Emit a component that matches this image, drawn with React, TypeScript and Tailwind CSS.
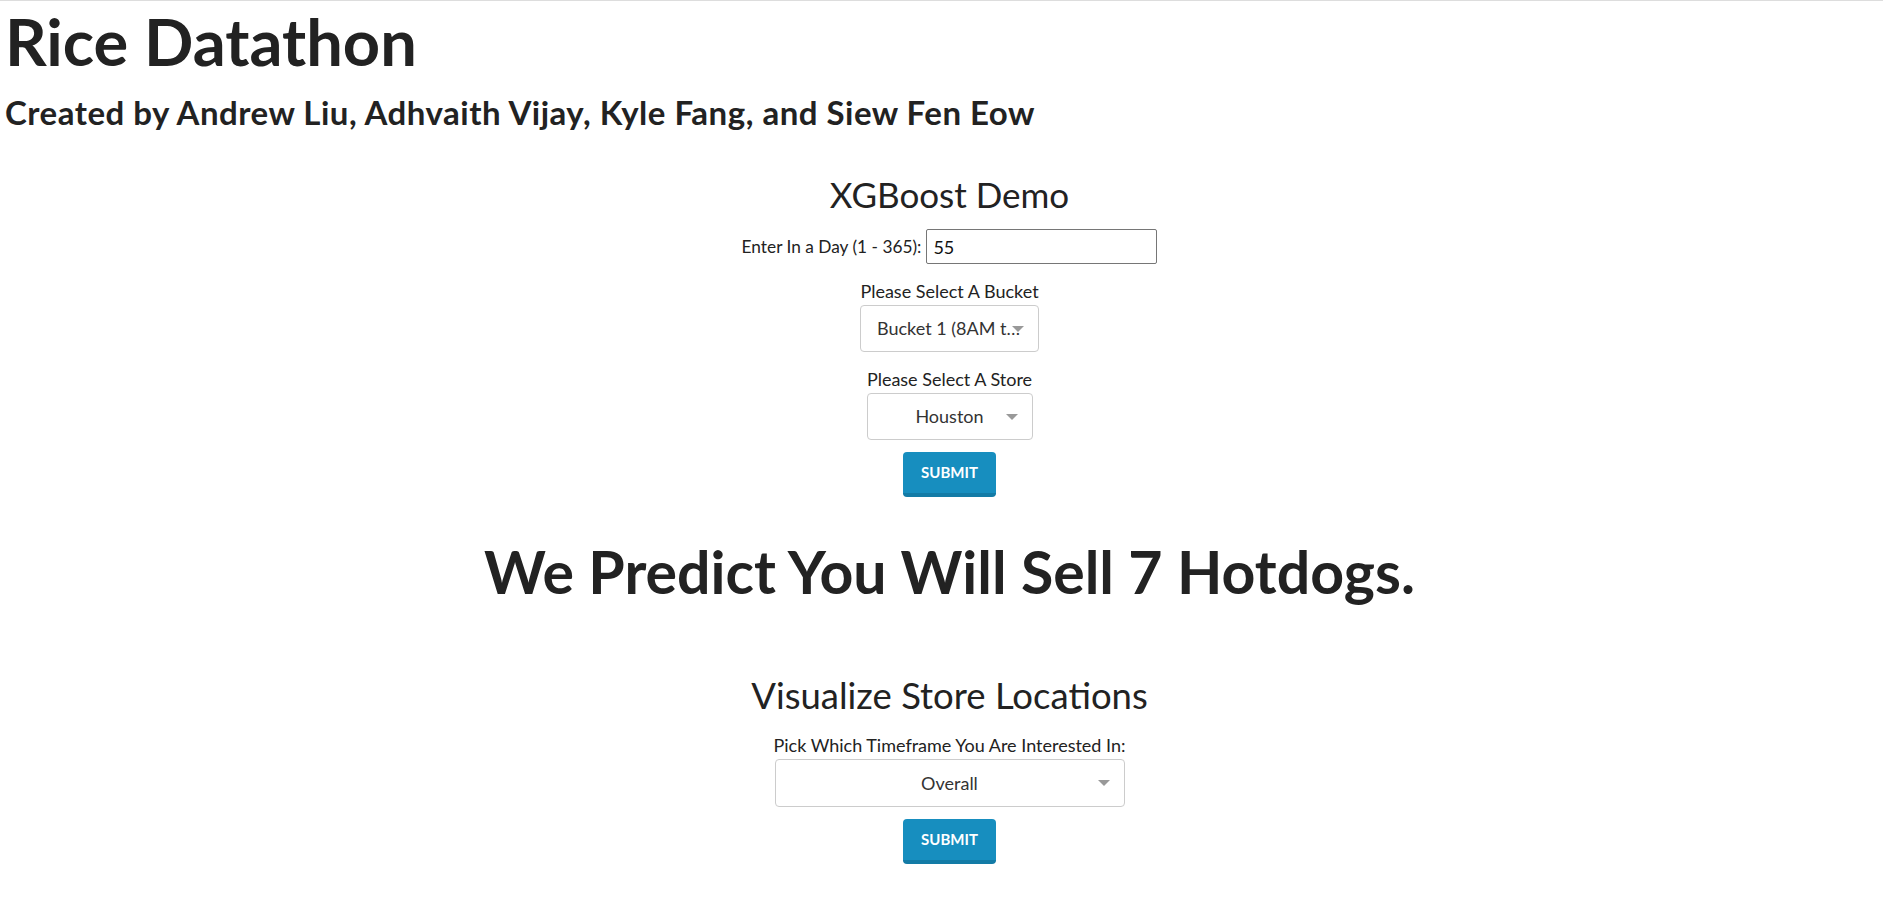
import { useState } from 'react'

function SelectBox({ value, className, textClassName }: { value: string; className: string; textClassName: string }) {
    return (
        <div className={`relative flex items-center rounded-[4px] border border-[#cccccc] bg-white text-[18px] text-[#333333] ${className}`}>
            <span className={`block overflow-hidden whitespace-nowrap text-ellipsis ${textClassName}`}>{value}</span>
            <span className="absolute right-[14px] top-1/2 -mt-[3px] h-0 w-0 border-x-[6.5px] border-t-[6px] border-x-transparent border-t-[#999999]" />
        </div>
    )
}

function SubmitButton() {
    return (
        <button className="mx-auto block h-[45px] w-[93px] rounded-[4px] border-b-4 border-[#137ba6] bg-[#178ebf] text-[15px] font-bold text-white">
            SUBMIT
        </button>
    )
}

export default function App() {
    const [day, setDay] = useState('55')

    return (
        <div className="min-h-screen border-t border-[#dddddd] bg-white font-['Lato',sans-serif] text-[#222222]">
            {/* Header */}
            <h1 className="pl-[5px] text-[65px] font-bold leading-[80px]">Rice Datathon</h1>
            <h2 className="mt-[13px] pl-[5px] text-[33px] font-bold leading-[36px] tracking-[0.5px]">
                Created by Andrew Liu, Adhvaith Vijay, Kyle Fang, and Siew Fen Eow
            </h2>

            <div className="pl-4 text-center">
                {/* XGBoost demo */}
                <h3 className="mt-[44px] text-[35px] leading-[40px]">XGBoost Demo</h3>
                <div className="mt-[15px] flex items-center justify-center gap-[5px]">
                    <label className="text-[17.3px] leading-[20px]">Enter In a Day (1 - 365):</label>
                    <input
                        value={day}
                        onChange={(e) => setDay(e.target.value)}
                        className="h-[35px] w-[231px] rounded-[2px] border border-[#767676] px-[6px] text-[18px] text-[#111111] outline-none"
                    />
                </div>

                <p className="mt-[17px] text-[18px] leading-[20px]">Please Select A Bucket</p>
                <SelectBox
                    value="Bucket 1 (8AM to 12PM)"
                    className="mx-auto mt-[4px] h-[47px] w-[179px]"
                    textClassName="pl-[16px] w-[166px] text-left"
                />

                <p className="mt-[17px] text-[18px] leading-[20px]">Please Select A Store</p>
                <SelectBox value="Houston" className="mx-auto mt-[4px] h-[47px] w-[166px] justify-center" textClassName="" />

                <div className="mt-[12px]">
                    <SubmitButton />
                </div>

                {/* Prediction */}
                <h2 className="mt-[41px] text-[59px] font-bold leading-[68px]">We Predict You Will Sell 7 Hotdogs.</h2>

                {/* Store locations */}
                <h3 className="mt-[66px] text-[36.5px] leading-[46px]">Visualize Store Locations</h3>
                <p className="mt-[17px] text-[18px] leading-[21px]">Pick Which Timeframe You Are Interested In:</p>
                <SelectBox value="Overall" className="mx-auto mt-[3px] h-[48px] w-[350px] justify-center" textClassName="" />
                <div className="mt-[12px]">
                    <SubmitButton />
                </div>
            </div>
        </div>
    )
}
